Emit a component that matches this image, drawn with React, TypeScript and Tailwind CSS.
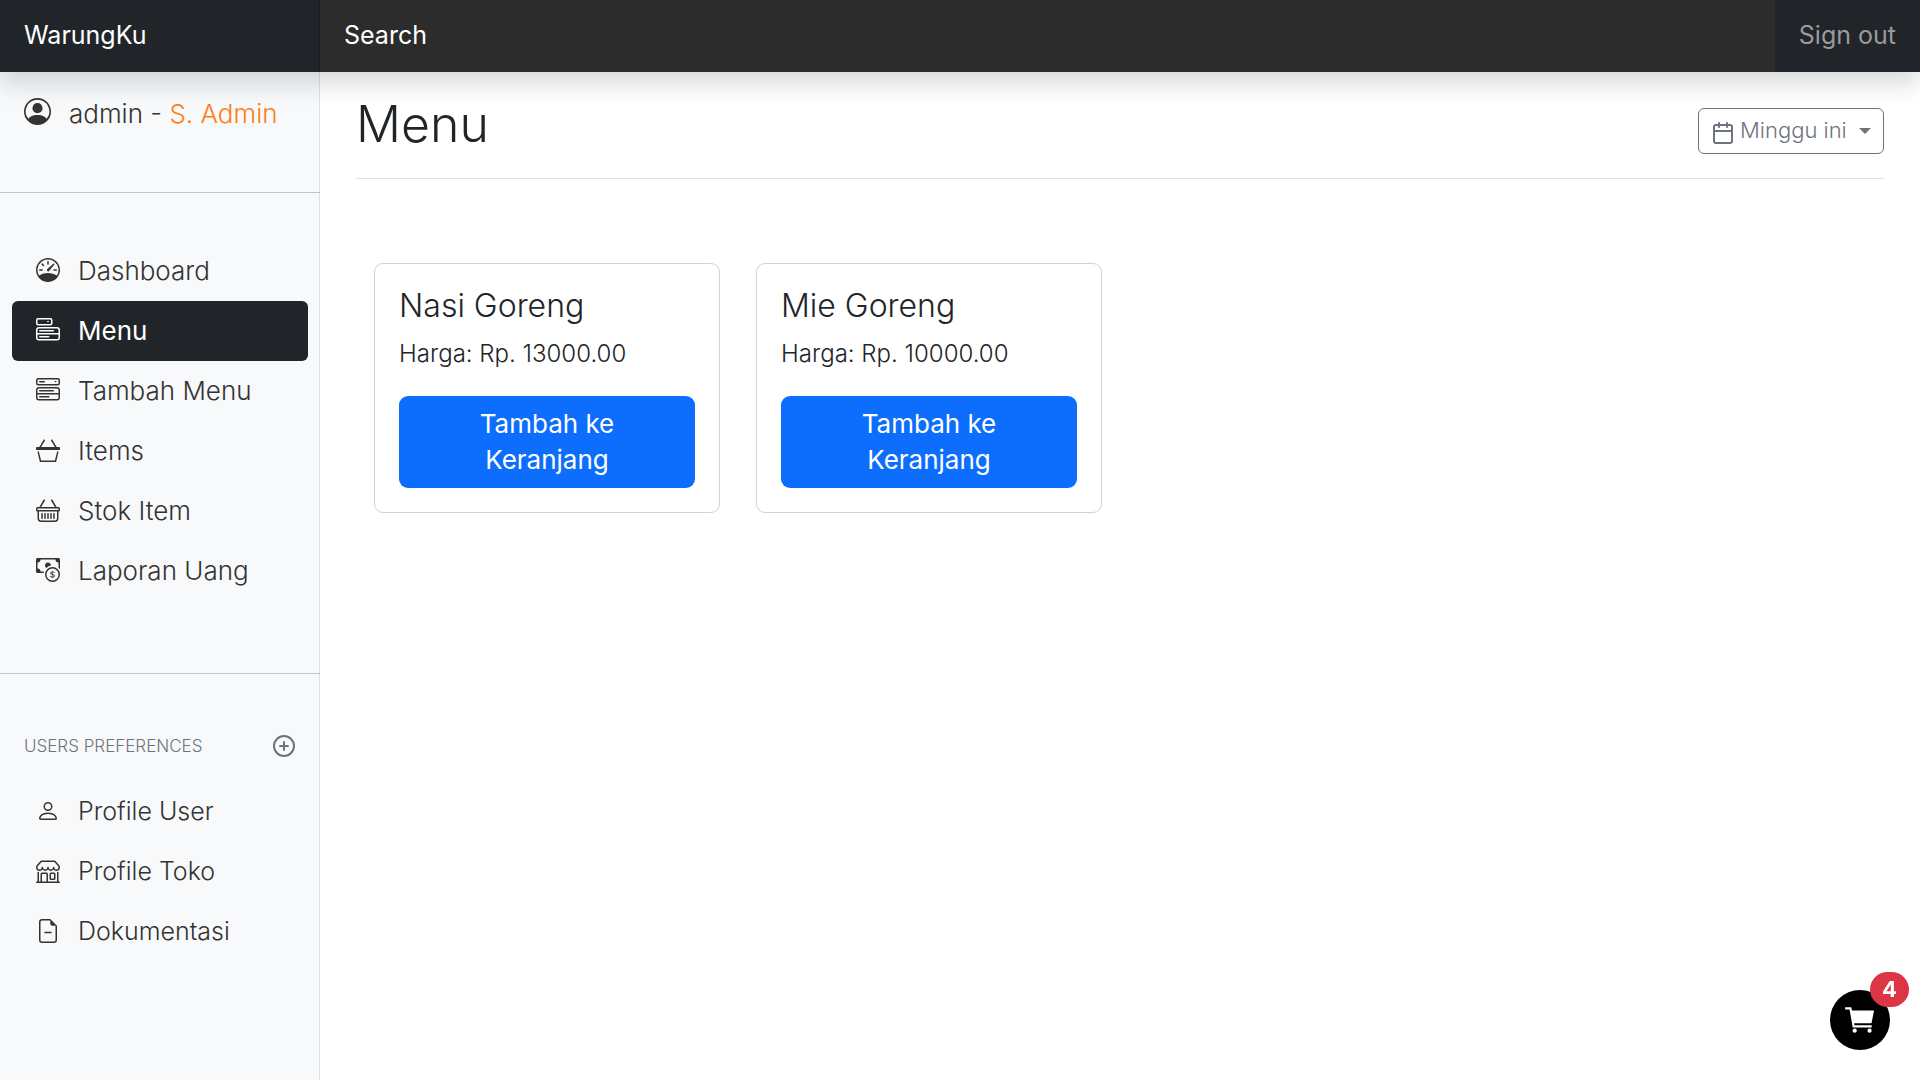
import type { IconType } from "react-icons";
import {
  BsPersonCircle,
  BsSpeedometer,
  BsMenuButton,
  BsMenuButtonWide,
  BsBasket3,
  BsBasket,
  BsCashCoin,
  BsPerson,
  BsShop,
  BsFileEarmarkMinus,
} from "react-icons/bs";
import { FiCalendar, FiPlusCircle } from "react-icons/fi";
import { IoCartSharp } from "react-icons/io5";

type NavItem = { label: string; icon: IconType; active?: boolean };

const mainNav: NavItem[] = [
  { label: "Dashboard", icon: BsSpeedometer },
  { label: "Menu", icon: BsMenuButton, active: true },
  { label: "Tambah Menu", icon: BsMenuButtonWide },
  { label: "Items", icon: BsBasket3 },
  { label: "Stok Item", icon: BsBasket },
  { label: "Laporan Uang", icon: BsCashCoin },
];

const userNav: NavItem[] = [
  { label: "Profile User", icon: BsPerson },
  { label: "Profile Toko", icon: BsShop },
  { label: "Dokumentasi", icon: BsFileEarmarkMinus },
];

const products = [
  { name: "Nasi Goreng", price: "13000.00" },
  { name: "Mie Goreng", price: "10000.00" },
];

function NavList({ items }: { items: NavItem[] }) {
  return (
    <ul className="px-3">
      {items.map(({ label, icon: Icon, active }) => (
        <li key={label}>
          <a
            href="#"
            aria-current={active ? "page" : undefined}
            className={
              active
                ? "flex h-[60px] items-center gap-[18px] rounded-md bg-[#212529] px-6 text-white"
                : "flex h-[60px] items-center gap-[18px] rounded-md px-6 font-light text-[#333333]"
            }
          >
            <Icon className="mb-0.5 size-6 shrink-0" />
            <span>{label}</span>
          </a>
        </li>
      ))}
    </ul>
  );
}

export default function App() {
  return (
    <div className="flex min-h-screen flex-col bg-white font-['Inter',sans-serif] text-2xl text-[#212529]">
      <header className="relative z-10 flex h-[72px] items-stretch bg-[#212529] text-[25px] text-white shadow-[0_12px_24px_rgba(0,0,0,0.15)]">
        <a href="#" className="flex w-80 shrink-0 items-center px-6 shadow-[inset_-1px_0_0_rgba(0,0,0,0.25)]">
          WarungKu
        </a>
        <input
          type="text"
          aria-label="Search"
          placeholder="Search"
          className="min-w-0 flex-1 bg-[#2c2c2d] px-6 placeholder:text-white placeholder:opacity-100 focus:outline-none"
        />
        <a href="#" className="flex items-center px-6 text-[#999b9d]">
          Sign out
        </a>
      </header>

      <div className="flex flex-1">
        <aside className="w-80 shrink-0 bg-[#f8f9fa] shadow-[inset_-1px_0_0_rgba(0,0,0,0.1)]">
          <div className="flex h-[121px] items-start gap-[18px] border-b border-[#c2c3c4] px-6 pt-6 text-[26px] font-light text-[#333333]">
            <BsPersonCircle className="mt-0.5 size-[27px] shrink-0" />
            <p className="leading-9">
              admin - <span className="text-[#fd7e14]">S. Admin</span>
            </p>
          </div>
          <nav aria-label="Main" className="border-b border-[#c2c3c4] pt-12 pb-[72px] text-[26px]">
            <NavList items={mainNav} />
          </nav>
          <div className="flex items-center justify-between px-6 pt-[60px] pb-6 text-[#6c757d]">
            <h2 className="text-[17px] leading-6 font-light uppercase">Users preferences</h2>
            <button type="button" aria-label="Add preference">
              <FiPlusCircle className="block size-6" />
            </button>
          </div>
          <nav aria-label="Users preferences" className="text-[25px]">
            <NavList items={userNav} />
          </nav>
        </aside>

        <main className="min-w-0 flex-1 px-9">
          <div className="flex items-end justify-between border-b border-[#dee2e6] pt-6 pb-6">
            <h1 className="pb-0.5 text-[50px] leading-[56px] font-light">Menu</h1>
            <label className="relative flex h-[46px] items-center rounded-md border border-[#6c757d] text-[#6c757d]">
              <FiCalendar className="pointer-events-none absolute left-3 mt-1 size-6" />
              <select
                aria-label="Periode"
                className="h-full appearance-none bg-transparent pr-9 pl-[41px] text-[22px] font-light focus:outline-none"
              >
                <option>Minggu ini</option>
                <option>Bulan ini</option>
              </select>
              <span className="pointer-events-none absolute right-3 border-x-6 border-t-6 border-x-transparent border-t-[#6c757d]" />
            </label>
          </div>

          <div className="grid grid-cols-4 pt-[84px]">
            {products.map((product) => (
              <article key={product.name} className="mx-[18px] rounded-[9px] border border-[#d2d3d4] p-6">
                <h2 className="text-[32px] leading-9 font-light">{product.name}</h2>
                <p className="mt-3 leading-9 font-light">Harga: Rp. {product.price}</p>
                <button
                  type="button"
                  className="mt-6 w-full rounded-[9px] bg-[#0d6efd] px-[18px] py-[10px] text-[26px] leading-9 text-white"
                >
                  Tambah ke
                  <br />
                  Keranjang
                </button>
              </article>
            ))}
          </div>
        </main>
      </div>

      <button
        type="button"
        aria-label="Keranjang, 4 item"
        className="fixed right-[30px] bottom-[30px] z-20 flex size-[60px] items-center justify-center rounded-full bg-black text-white"
      >
        <IoCartSharp className="size-[34px]" />
        <span className="absolute -top-[18px] -right-[19px] flex h-[35px] w-[39px] items-center justify-center rounded-full bg-[#dc3545] text-[22px] font-bold">
          4
        </span>
      </button>
    </div>
  );
}
